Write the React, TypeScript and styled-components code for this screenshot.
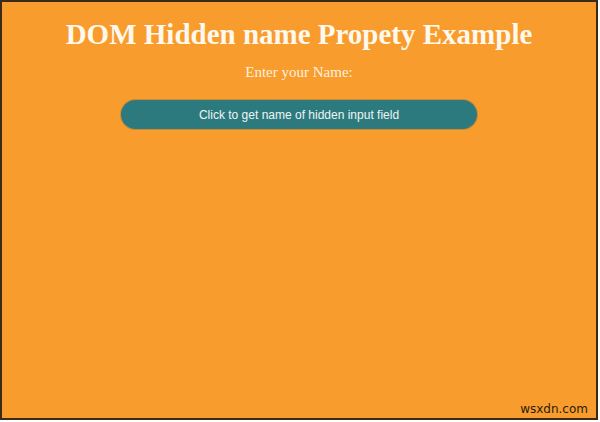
import React from "react";
import styled, { createGlobalStyle } from "styled-components";

const Global = createGlobalStyle`
  html, body { margin: 0; padding: 0; background: #ffffff; }
`;

const Frame = styled.div`
  box-sizing: border-box;
  width: 598px;
  height: 420px;
  border: 2px solid #3b2a18;
  background: #f89c2e;
  display: flex;
  flex-direction: column;
  align-items: center;
  position: relative;
`;

const Title = styled.h1`
  margin: 15px 0 0;
  font-family: "Liberation Serif", "Times New Roman", serif;
  font-weight: bold;
  font-size: 29px;
  line-height: 35px;
  color: #fff8ec;
`;

const Label = styled.p`
  margin: 10px 0 0;
  font-family: "Liberation Serif", "Times New Roman", serif;
  font-size: 15px;
  line-height: 20px;
  color: #fff1dc;
`;

const Action = styled.button`
  margin-top: 18px;
  width: 356px;
  height: 29px;
  border: none;
  border-radius: 15px;
  background: #2d7a7e;
  box-shadow: 0 0 0 1px rgba(120, 110, 60, 0.35);
  color: #eef5f3;
  font-family: "Liberation Sans", Arial, sans-serif;
  font-size: 12px;
  cursor: pointer;
`;

const Watermark = styled.span`
  position: absolute;
  right: 8px;
  bottom: 2px;
  font-family: "DejaVu Sans", "Liberation Sans", sans-serif;
  font-size: 12px;
  color: #2a1c0c;
`;

export default function App() {
  return (
    <>
      <Global />
      <Frame>
        <Title>DOM Hidden name Propety Example</Title>
        <Label>Enter your Name:</Label>
        <Action type="button">Click to get name of hidden input field</Action>
        <Watermark>wsxdn.com</Watermark>
      </Frame>
    </>
  );
}
